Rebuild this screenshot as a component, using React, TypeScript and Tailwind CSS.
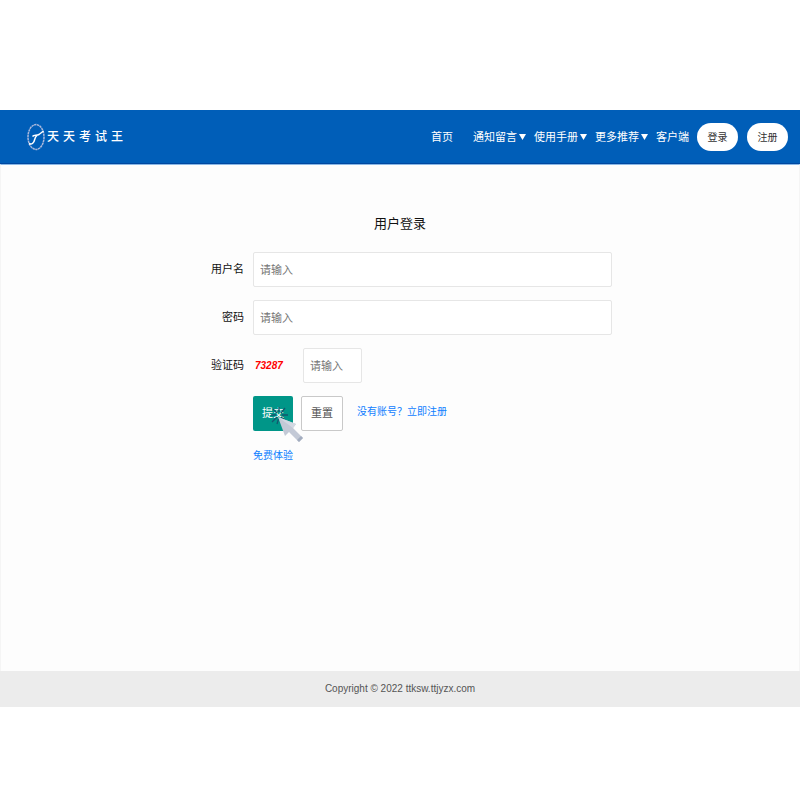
import { useState } from "react";
import type { FormEvent } from "react";

const navMenus = ["通知留言", "使用手册", "更多推荐"];

const logoChars = ["天", "天", "考", "试", "王"];

const inputStyle =
  "h-[35px] rounded-[2px] border border-[#e6e6e6] bg-white px-1.5 text-[11px] text-[#333] outline-none placeholder:text-[#757575] focus:border-[#c9c9c9]";

function Logo() {
  return (
    <a href="#" className="flex items-center gap-0.5 text-white" aria-label="天天考试王">
      <svg width="18" height="28" viewBox="0 0 18 28" fill="none">
        <ellipse cx="9" cy="14" rx="8" ry="12.4" stroke="#a9b8dc" strokeWidth="1.5" strokeDasharray="2.4 0.5" />
        <path d="M2 20.500C5 22 7 19.500 7.500 17C8 15 8.500 13.500 10 12.500" stroke="#fff" strokeWidth="1.5" />
        <path d="M5.500 13.500C7 11.500 9.500 13 12 11.500L16.500 8" stroke="#fff" strokeWidth="1.5" />
      </svg>
      <span className="flex items-center gap-1 text-[12px] leading-7 font-medium">
        {logoChars.map((char, i) => (
          <span key={i}>{char}</span>
        ))}
      </span>
    </a>
  );
}

function Caret() {
  return (
    <svg width="7" height="6" viewBox="0 0 7 6" fill="currentColor">
      <path d="M0 0H7L3.500 6Z" />
    </svg>
  );
}

function Pointer() {
  return (
    <svg
      className="pointer-events-none absolute top-2 left-4"
      width="36"
      height="40"
      viewBox="0 0 36 40"
      fill="none"
    >
      <path
        d="M10 3V8M4 5L8 9M2 11H7M3 18L8 13M8 20L9.500 15M12 9L16 4M13 11H19M12 13L17 17"
        stroke="#14566e"
        strokeWidth="1.3"
      />
      <path d="M9 13L27 20L24 24L34 34L30 38L20 28L16 32Z" fill="#c3c9d6" />
      <path d="M32 32L34 34L30 38L28 36Z" fill="#a3adbf" />
      <path d="M9 13L27 20L24 24Z" fill="#d3d8e2" />
    </svg>
  );
}

function Header() {
  return (
    <header className="flex h-[54px] items-center justify-between border-b border-[#0048a0] bg-[#005eb8] pt-px pr-3 pl-[27px]">
      <Logo />
      <div className="flex items-center gap-2">
        <nav className="flex items-center gap-2 text-[11px] text-white">
          <a href="#" className="mr-3">
            首页
          </a>
          {navMenus.map((label) => (
            <button key={label} type="button" className="flex items-center gap-0.5">
              {label}
              <Caret />
            </button>
          ))}
          <a href="#">客户端</a>
        </nav>
        <div className="flex items-center gap-[9px] text-[10px] text-[#333]">
          <button type="button" className="h-7 w-[41px] rounded-full bg-white">
            登录
          </button>
          <button type="button" className="h-7 w-[41px] rounded-full bg-white">
            注册
          </button>
        </div>
      </div>
    </header>
  );
}

function LoginForm() {
  const [username, setUsername] = useState("");
  const [password, setPassword] = useState("");
  const [code, setCode] = useState("");

  const handleSubmit = (e: FormEvent) => {
    e.preventDefault();
  };

  const handleReset = () => {
    setUsername("");
    setPassword("");
    setCode("");
  };

  return (
    <form
      onSubmit={handleSubmit}
      onReset={handleReset}
      className="mx-auto grid w-full max-w-[424px] grid-cols-[56px_1fr] items-center gap-x-[9px] gap-y-[13px] text-[11px] text-[#111]"
    >
      <label htmlFor="username" className="text-right">
        用户名
      </label>
      <input
        id="username"
        className={inputStyle}
        placeholder="请输入"
        value={username}
        onChange={(e) => setUsername(e.target.value)}
      />

      <label htmlFor="password" className="text-right">
        密码
      </label>
      <input
        id="password"
        type="password"
        className={inputStyle}
        placeholder="请输入"
        value={password}
        onChange={(e) => setPassword(e.target.value)}
      />

      <label htmlFor="code" className="text-right">
        验证码
      </label>
      <div className="flex items-center">
        <span className="w-[50px] pl-0.5 text-[10px] font-bold text-[#f00] italic">73287</span>
        <input
          id="code"
          className={`${inputStyle} w-[59px]`}
          placeholder="请输入"
          value={code}
          onChange={(e) => setCode(e.target.value)}
        />
      </div>

      <div className="col-start-2 flex items-center gap-2">
        <div className="relative">
          <button type="submit" className="h-[35px] w-10 rounded-[2px] bg-[#009688] text-white">
            提交
          </button>
          <Pointer />
        </div>
        <button
          type="reset"
          className="h-[35px] w-[42px] rounded-[2px] border border-[#c9c9c9] bg-white text-[#555]"
        >
          重置
        </button>
        <a href="#" className="ml-1.5 pb-1 text-[10px] text-[#1080ff]">
          没有账号？立即注册
        </a>
      </div>

      <a href="#" className="col-start-2 justify-self-start text-[10px] leading-6 text-[#1080ff]">
        免费体验
      </a>
    </form>
  );
}

export default function App() {
  return (
    <div className="flex min-h-screen flex-col bg-white pt-[110px] pb-[93px] font-['Liberation_Sans','Noto_Sans_CJK_SC',sans-serif]">
      <Header />
      <main className="flex-1 border-x border-t border-x-[#f5f5f5] border-t-[#8ab8e6] bg-[#fdfdfd] pt-[47px] pb-10">
        <h1 className="mb-4 text-center text-[13px] leading-6 text-[#111]">用户登录</h1>
        <LoginForm />
      </main>
      <footer className="bg-[#ececec] text-center text-[10px] leading-9 text-[#555]">
        Copyright © 2022 ttksw.ttjyzx.com
      </footer>
    </div>
  );
}
